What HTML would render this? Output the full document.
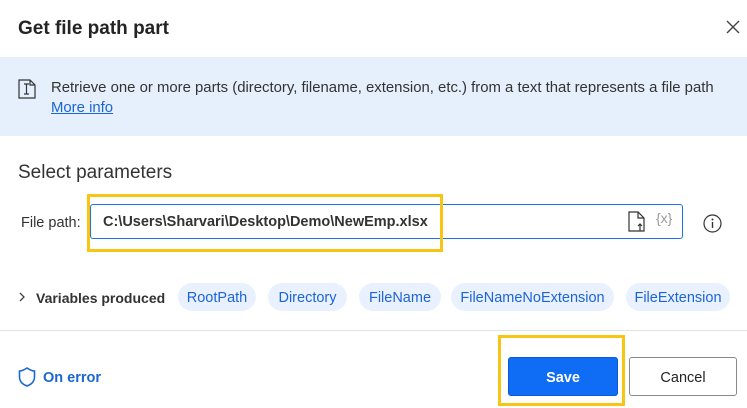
<!DOCTYPE html>
<html><head><style>
*{box-sizing:border-box;margin:0;padding:0}
body{width:747px;height:408px;background:#fff;font-family:"Liberation Sans",sans-serif;color:#242424;position:relative;overflow:hidden}
.a{position:absolute}
.pill{position:absolute;top:283px;height:28px;background:#e8f1fd;color:#1d64d8;border-radius:14px;font-size:14.5px;line-height:30px;text-align:center}
</style></head><body>
<div class="a" style="left:18px;top:18px;font-size:19px;font-weight:bold;color:#242424">Get file path part</div>
<svg class="a" style="left:725px;top:19px" width="16" height="16"><path d="M2 2L14 14M14 2L2 14" stroke="#444" stroke-width="1.4"/></svg>
<div class="a" style="left:0;top:57px;width:747px;height:79px;background:#e6effc"></div>
<svg class="a" style="left:18px;top:79px" width="18" height="20"><path d="M1 1H12L17 6V19H1Z M12 1V6H17" fill="none" stroke="#333" stroke-width="1.2"/><path d="M6 5H11M8.5 5V15M6 15H11" stroke="#333" stroke-width="1.2" fill="none"/></svg>
<div class="a" style="left:51px;top:80px;font-size:14.9px;color:#333">Retrieve one or more parts (directory, filename, extension, etc.) from a text that represents a file path</div>
<div class="a" style="left:51px;top:100px;font-size:14.9px;color:#1a66d2;text-decoration:underline">More info</div>
<div class="a" style="left:18px;top:162px;font-size:19px;color:#333">Select parameters</div>
<div class="a" style="left:21px;top:215px;font-size:14.5px;color:#333">File path:</div>
<div class="a" style="left:90px;top:204px;width:593px;height:35px;border:1px solid #1a73e8;border-radius:3px"></div>
<div class="a" style="left:103px;top:214px;font-size:14.5px;font-weight:bold;color:#333">C:\Users\Sharvari\Desktop\Demo\NewEmp.xlsx</div>
<div class="a" style="left:87px;top:194px;width:356px;height:58px;border:3px solid #f7c614"></div>
<svg class="a" style="left:628px;top:211px" width="20" height="22"><path d="M1 1H10L16 7V20H1Z M10 1V7H16" fill="none" stroke="#333" stroke-width="1.2"/><path d="M12 20V13M10 15L12 13L14 15" fill="none" stroke="#333" stroke-width="1.2"/></svg>
<div class="a" style="left:656px;top:210px;font-size:14px;color:#999">{x}</div>
<svg class="a" style="left:703px;top:214px" width="19" height="19"><circle cx="9.5" cy="9.5" r="8.5" fill="none" stroke="#333" stroke-width="1.2"/><path d="M9.5 8V14" stroke="#333" stroke-width="1.4"/><circle cx="9.5" cy="5.5" r="1" fill="#333"/></svg>
<svg class="a" style="left:18px;top:291px" width="8" height="12"><path d="M2 2L6 6L2 10" fill="none" stroke="#444" stroke-width="1.3"/></svg>
<div class="a" style="left:36px;top:290px;font-size:14px;font-weight:bold;color:#333">Variables produced</div>
<div class="pill" style="left:178px;width:78px">RootPath</div>
<div class="pill" style="left:268px;width:79px">Directory</div>
<div class="pill" style="left:359px;width:82px">FileName</div>
<div class="pill" style="left:451px;width:163px">FileNameNoExtension</div>
<div class="pill" style="left:626px;width:104px">FileExtension</div>
<div class="a" style="left:0;top:330px;width:747px;height:1px;background:#e3e3e3"></div>
<svg class="a" style="left:18px;top:367px" width="18" height="20"><path d="M9 1C6 3 4 4 1.5 4V10C1.5 15 5 17.5 9 19C13 17.5 16.5 15 16.5 10V4C14 4 12 3 9 1Z" fill="none" stroke="#1a66d2" stroke-width="1.6"/></svg>
<div class="a" style="left:43px;top:370px;font-size:14.5px;font-weight:bold;color:#1a66d2">On error</div>
<div class="a" style="left:498px;top:335px;width:127px;height:71px;border:3px solid #f7c614"></div>
<div class="a" style="left:508px;top:357px;width:110px;height:39px;background:#0f6cf5;border:1px solid #0a5bd0;border-radius:3px;color:#fff;font-size:14.5px;font-weight:bold;text-align:center;line-height:41px">Save</div>
<div class="a" style="left:629px;top:357px;width:108px;height:39px;background:#fff;border:1px solid #8a8a8a;border-radius:3px;color:#242424;font-size:14.5px;text-align:center;line-height:41px">Cancel</div>
</body></html>
